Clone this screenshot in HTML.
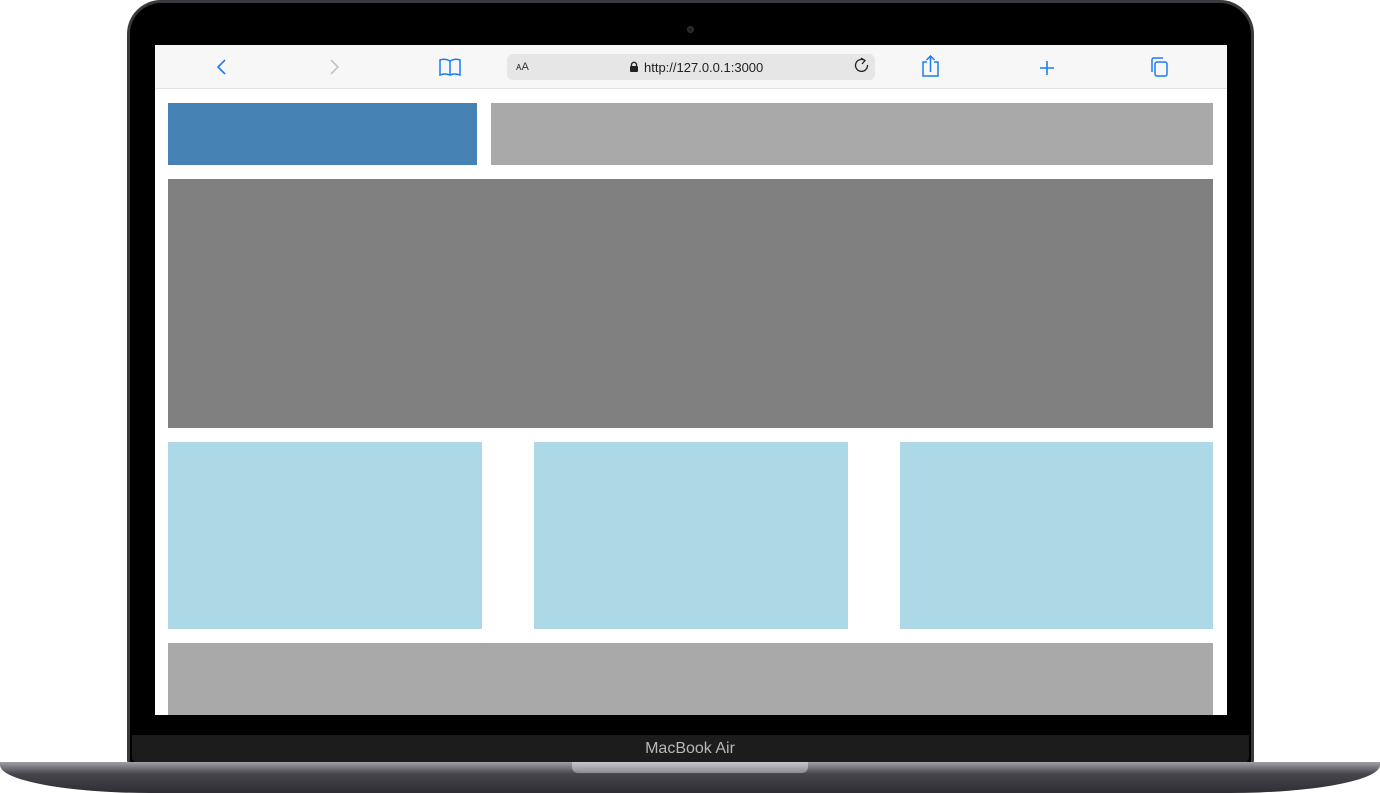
<!DOCTYPE html>
<html><head><style>
*{margin:0;padding:0;box-sizing:border-box}
body{width:1380px;height:793px;background:#fff;position:relative;overflow:hidden;font-family:"Liberation Sans",sans-serif}
.a{position:absolute}
</style></head><body>
<div class="a" style="left:127px;top:0;width:1127px;height:766px;background:#000;border-radius:34px 34px 6px 6px;border:3px solid #3a3a3e;border-bottom:none"></div>
<div class="a" style="left:687px;top:26px;width:7px;height:7px;border-radius:50%;background:#222;border:1px solid #333"></div>
<div class="a" style="left:132px;top:735px;width:1117px;height:28px;background:#1c1c1c;border-radius:0 0 6px 6px"></div>
<div class="a" style="left:0;top:740px;width:1380px;height:18px;text-align:center;color:#b8b8b8;font-size:16px">MacBook Air</div>
<div class="a" style="left:0;top:762px;width:1380px;height:31px;background:linear-gradient(#a0a0a6 0,#7a7a80 5px,#45454b 12px,#2e2e34 31px);border-radius:0 0 150px 150px/0 0 28px 28px"></div>
<div class="a" style="left:572px;top:762px;width:236px;height:11px;background:linear-gradient(#c8c8cc,#8a8a90);border-radius:0 0 6px 6px"></div>
<div class="a" style="left:155px;top:45px;width:1072px;height:670px;background:#fff"></div>
<div class="a" style="left:155px;top:45px;width:1072px;height:44px;background:#f7f7f7;border-bottom:1px solid #e2e2e2"></div>
<svg class="a" style="left:155px;top:45px" width="1072" height="44">
<path d="M70 15 L63 22 L70 29" stroke="#1a7cf5" stroke-width="1.6" fill="none"/>
<path d="M176 15 L183 22 L176 29" stroke="#c4c4c4" stroke-width="1.6" fill="none"/>
<path d="M285 15 Q290 13 295 16 Q300 13 305 15 V30 Q300 28 295 30 Q290 28 285 30 Z M295 16 V30" stroke="#1a7cf5" stroke-width="1.5" fill="none"/>
<path d="M772 17 H768 V31 H783 V17 H779 M775.5 27 V11 M771.5 15 L775.5 11 L779.5 15" stroke="#1a7cf5" stroke-width="1.5" fill="none"/>
<path d="M892 16 V30 M885 23 H899" stroke="#1a7cf5" stroke-width="1.6" fill="none"/>
<rect x="1000" y="17" width="12" height="14" rx="2" stroke="#1a7cf5" stroke-width="1.5" fill="none"/>
<path d="M997 27 V15 Q997 13 999 13 H1008" stroke="#1a7cf5" stroke-width="1.5" fill="none"/>
<rect x="475" y="21" width="8" height="6" rx="1" fill="#222"/>
<path d="M476.5 21 V19 Q479 15.5 481.5 19 V21" stroke="#222" stroke-width="1.3" fill="none"/>
<path d="M711 16 A6 6 0 1 0 712 21" stroke="#222" stroke-width="1.4" fill="none" transform="translate(0,0)"/>
<path d="M707 14 L711 16 L708 19" stroke="#222" stroke-width="1.4" fill="none"/>
</svg>
<div class="a" style="left:507px;top:54px;width:368px;height:26px;background:#e6e6e6;border-radius:6px;z-index:-0"></div>
<svg class="a" style="left:155px;top:45px" width="1072" height="44">
<rect x="475" y="21" width="8" height="6" rx="1" fill="#222"/>
<path d="M476.5 21 V19 Q479 15.5 481.5 19 V21" stroke="#222" stroke-width="1.3" fill="none"/>
<path d="M710 15.5 A6 6 0 1 0 712.5 20" stroke="#222" stroke-width="1.3" fill="none"/>
<path d="M706 13 L710 15.5 L707 19" stroke="#222" stroke-width="1.3" fill="none"/>
</svg>
<div class="a" style="left:516px;top:61px;font-size:11px;color:#333">ᴀA</div>
<div class="a" style="left:644px;top:60px;font-size:13px;color:#222">http://127.0.0.1:3000</div>
<div class="a" style="left:168px;top:103px;width:309px;height:62px;background:#4682b4"></div>
<div class="a" style="left:491px;top:103px;width:722px;height:62px;background:#a9a9a9"></div>
<div class="a" style="left:168px;top:179px;width:1045px;height:249px;background:#808080"></div>
<div class="a" style="left:168px;top:442px;width:314px;height:187px;background:#add8e6"></div>
<div class="a" style="left:534px;top:442px;width:314px;height:187px;background:#add8e6"></div>
<div class="a" style="left:900px;top:442px;width:313px;height:187px;background:#add8e6"></div>
<div class="a" style="left:168px;top:643px;width:1045px;height:72px;background:#a9a9a9"></div>
</body></html>
